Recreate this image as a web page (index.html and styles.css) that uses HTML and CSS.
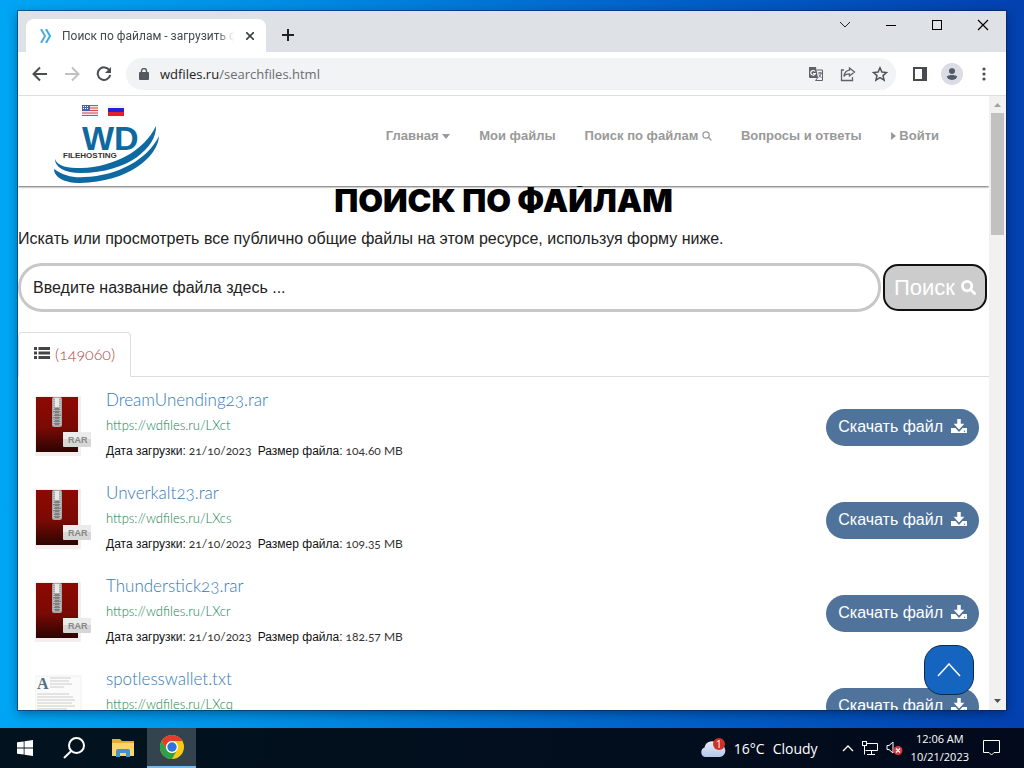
FILE: index.html
```html
<!DOCTYPE html>
<html lang="ru">

<head>
    <meta charset="UTF-8">
    <meta name="viewport" content="width=device-width, initial-scale=1.0">
    <title>Поиск по файлам - загрузить файлы</title>
    <link rel="stylesheet" href="styles.css">
</head>
<body>
    <svg class="defs" width="0" height="0" aria-hidden="true">
        <defs>
            <linearGradient id="red" x1="0" y1="0" x2="0" y2="1">
                <stop offset="0" stop-color="#8c0a02"/>
                <stop offset="0.55" stop-color="#7a0a04"/>
                <stop offset="1" stop-color="#2c0402"/>
            </linearGradient>
            <linearGradient id="cloud" x1="0" y1="0" x2="0" y2="1">
                <stop offset="0" stop-color="#e6ecf8"/>
                <stop offset="1" stop-color="#b3c8ec"/>
            </linearGradient>
            <symbol id="rar" viewBox="0 0 56 66">
                <rect x="0" y="0" width="46" height="60" fill="#f6eeee"/>
                <rect x="1" y="1" width="42" height="55" fill="url(#red)"/>
                <rect x="17" y="1" width="10" height="30" rx="2" fill="#a8a8a8"/>
                <rect x="20" y="2" width="4" height="9" fill="#e8e8e8"/>
                <path d="M19 13h6M18 16h7M19 19h7M18 22h7M19 25h6M19 28h6" stroke="#555" stroke-width="1"/>
                <path d="M19 2v27M25 2v27" stroke="#ddd" stroke-width="1" stroke-dasharray="1 1"/>
                <rect x="28" y="36" width="28" height="15" rx="1" fill="#d6d6d6"/>
                <rect x="28" y="36" width="28" height="7" fill="#ebebeb"/>
                <text x="33" y="47" class="rar-label">RAR</text>
            </symbol>
            <symbol id="txt" viewBox="0 0 56 66">
                <rect x="0" y="1" width="46" height="62" fill="#fbfbfb" stroke="#f0f0f0"/>
                <text x="2" y="14" class="txt-label">A</text>
                <path d="M15 3h21M15 6h19M15 9h22M15 12h14M2 19h32M2 22h36M2 25h38M2 28h35M2 31h38M2 34h30" stroke="#ccc" stroke-width="1"/>
            </symbol>
            <symbol id="download" viewBox="0 0 16 15">
                <path d="M0 9h16v5H0z" fill="#fff"/>
                <path d="M5.500-1h5v5h4.500L8 11.800 1 4h4.500z" fill="#fff" stroke="#4f739b" stroke-width="1.500"/>
                <circle cx="13.500" cy="12.200" r=".7" fill="#4f739b"/>
            </symbol>
            <symbol id="loupe" viewBox="0 0 16 16">
                <circle cx="6.500" cy="6.500" r="5" fill="none" stroke="currentColor"/>
                <path d="M10 10l4.500 4.500" stroke="currentColor" stroke-linecap="round"/>
            </symbol>
        </defs>
    </svg>
    <div class="desktop">
        <div class="window">
            <div class="titlebar">
                <div class="tab">
                    <svg class="favicon" width="12" height="14" viewBox="0 0 12 14" fill="none" stroke-width="2">
                        <path d="M1 0l4 7-4 7" stroke="#5aa9d6"/>
                        <path d="M6 0l4 7-4 7" stroke="#34b0ea"/>
                    </svg>
                    <span class="tab-title">Поиск по файлам - загрузить файлы</span>
                    <button class="icon-btn" aria-label="Закрыть вкладку">
                        <svg width="8" height="8" viewBox="0 0 8 8" stroke="#3c4043" stroke-width="1.600"><path d="M0 0l8 8M8 0L0 8"/></svg>
                    </button>
                </div>
                <button class="icon-btn new-tab" aria-label="Новая вкладка">
                    <svg width="12" height="12" viewBox="0 0 12 12" stroke="#202124" stroke-width="2"><path d="M6 0v12M0 6h12"/></svg>
                </button>
                <div class="win-btns">
                    <button class="icon-btn" aria-label="Поиск вкладок"><svg width="12" height="12" viewBox="0 0 12 12" fill="none" stroke="#222"><path d="M1 3l5 5 5-5"/></svg></button>
                    <button class="icon-btn" aria-label="Свернуть"><svg width="12" height="12" viewBox="0 0 12 12" stroke="#000"><path d="M1 6.500h10"/></svg></button>
                    <button class="icon-btn" aria-label="Развернуть"><svg width="12" height="12" viewBox="0 0 12 12" fill="none" stroke="#000"><rect x="1.500" y="1.500" width="9" height="9"/></svg></button>
                    <button class="icon-btn" aria-label="Закрыть"><svg width="12" height="12" viewBox="0 0 12 12" stroke="#000" stroke-width="1.200"><path d="M1 1l10 10M11 1L1 11"/></svg></button>
                </div>
            </div>
            <div class="toolbar">
                <button class="icon-btn" aria-label="Назад"><svg width="16" height="16" viewBox="0 0 16 16" fill="none" stroke="#4a4d51" stroke-width="2"><path d="M15 8H2M8 1.500L1.500 8 8 14.500"/></svg></button>
                <button class="icon-btn" aria-label="Вперёд"><svg width="16" height="16" viewBox="0 0 16 16" fill="none" stroke="#bfc1c4" stroke-width="2"><path d="M1 8h13M8 1.500L14.500 8 8 14.500"/></svg></button>
                <button class="icon-btn" aria-label="Обновить"><svg width="16" height="16" viewBox="0 0 16 16" fill="none" stroke="#4a4d51" stroke-width="2"><path d="M13.500 4.500A6.300 6.300 0 1 0 14.200 9"/><path d="M15 1v6H9z" fill="#4a4d51" stroke="none"/></svg></button>
                <div class="omnibox">
                    <svg width="10" height="12" viewBox="0 0 10 12"><rect x="0" y="4" width="10" height="8" rx="1" fill="#55585c"/><path d="M2.500 5V3a2.500 2.500 0 0 1 5 0v2" fill="none" stroke="#55585c" stroke-width="1.400"/></svg>
                    <span class="url">wdfiles.ru<span class="path">/searchfiles.html</span></span>
                    <button class="icon-btn" aria-label="Перевести"><svg width="16" height="16" viewBox="0 0 16 16"><path d="M1 1h7l2 11H2a1 1 0 0 1-1-1z" fill="#5f6368"/><path d="M9 4h5.500v10.500H7.500l2-2.500" fill="none" stroke="#5f6368"/><path d="M7 5.500A2.300 2.300 0 1 0 7.300 7.500H5" fill="none" stroke="#fff" stroke-width="1.200"/><path d="M10 7h4M12 6v1M13 7c0 2-1 3-2.500 4.500M11 8.500c.5 1.500 1.500 2.500 2.500 3" fill="none" stroke="#5f6368"/></svg></button>
                    <button class="icon-btn" aria-label="Поделиться"><svg width="16" height="16" viewBox="0 0 16 16" fill="none" stroke="#5f6368" stroke-width="1.300"><path d="M4 4H1.500v10.500h11V11"/><path d="M9.500 2l5 4-5 4V7.800C7 7.800 5 8.500 4 10.500 4.300 7 6.500 4.500 9.500 4.200z"/></svg></button>
                    <button class="icon-btn" aria-label="В закладки"><svg width="16" height="16" viewBox="0 0 16 16" fill="none" stroke="#4f5357" stroke-width="1.500"><path d="M8 1.800l1.900 4.300 4.600.4-3.500 3.100 1.100 4.600L8 11.700l-4.100 2.500L5 9.600 1.500 6.500l4.600-.4z"/></svg></button>
                </div>
                <button class="icon-btn" aria-label="Боковая панель"><svg width="14" height="14" viewBox="0 0 14 14"><rect x="1" y="1" width="12" height="12" fill="none" stroke="#474a4e" stroke-width="2"/><path d="M9 0h5v14H9z" fill="#474a4e"/></svg></button>
                <button class="icon-btn avatar" aria-label="Профиль"><svg width="12" height="12" viewBox="0 0 12 12" fill="#525a66"><circle cx="6" cy="3" r="3"/><path d="M0 12V10c0-2 3-3 6-3s6 1 6 3v2z"/></svg></button>
                <button class="icon-btn" aria-label="Меню"><svg width="4" height="14" viewBox="0 0 4 14" fill="#4a4d51"><circle cx="2" cy="2" r="1.600"/><circle cx="2" cy="7" r="1.600"/><circle cx="2" cy="12" r="1.600"/></svg></button>
            </div>
            <div class="view">
                <div class="page">
                    <header class="header">
                        <div class="brand">
                            <div class="langs">
                                <a href="#" aria-label="English"><svg width="16" height="11" viewBox="0 0 16 11"><rect width="16" height="11" fill="#f4e4e6"/><path d="M0 .5h16M0 3h16M0 5.500h16M0 8h16M0 10.500h16" stroke="#d9475a"/><rect width="8" height="6" fill="#4a5fb0"/><path d="M1 1.500h6M1 3.500h6" stroke="#fff" stroke-dasharray="1 1"/></svg></a>
                                <a href="#" aria-label="Русский"><svg width="16" height="11" viewBox="0 0 16 11"><rect width="16" height="4" fill="#f4f4f4"/><rect y="3" width="16" height="4" fill="#2321d8"/><rect y="7" width="16" height="4" fill="#e0202c"/></svg></a>
                            </div>
                            <a href="#" aria-label="WD Filehosting">
                                <svg class="logo" width="106" height="61" viewBox="0 0 106 61">
                                    <text x="28" y="27" class="logo-wd">WD</text>
                                    <text x="9" y="35" class="logo-sub">FILEHOSTING</text>
                                    <path d="M1 36C4 44 14 45 27 45 60 44 90 28 102 3 103 24 74 50 27 50 10 50 1 44 1 36z" fill="#0d699f"/>
                                    <path d="M0 46c10 7 20 9 30 8C64 53 94 36 105 13c-1 21-31 46-79 47C10 60 0 54 0 46z" fill="#0d699f"/>
                                </svg>
                            </a>
                        </div>
                        <nav class="nav">
                            <a href="#">Главная <svg width="8" height="5" viewBox="0 0 8 5"><path d="M0 0h8L4 5z" fill="#999"/></svg></a>
                            <a href="#">Мои файлы</a>
                            <a href="#">Поиск по файлам <svg class="loupe" width="10" height="10"><use href="#loupe"/></svg></a>
                            <a href="#">Вопросы и ответы</a>
                            <a href="#"><svg width="5" height="8" viewBox="0 0 5 8"><path d="M0 0l5 4-5 4z" fill="#999"/></svg> Войти</a>
                        </nav>
                    </header>
                    <main>
                        <h1>Поиск по файлам</h1>
                        <p class="lead">Искать или просмотреть все публично общие файлы на этом ресурсе, используя форму ниже.</p>
                        <form class="search">
                            <input type="text" aria-label="Название файла" placeholder="Введите название файла здесь ...">
                            <button type="button">Поиск <svg class="loupe" width="15" height="15"><use href="#loupe"/></svg></button>
                        </form>
                        <div class="tabs">
                            <a href="#" class="active">
                                <svg width="16" height="12" viewBox="0 0 16 12" fill="#444"><path d="M0 0h3v3H0zM0 4.500h3v3H0zM0 9h3v3H0zM4.500 0H16v3H4.500zM4.500 4.500H16v3H4.500zM4.500 9H16v3H4.500z"/></svg>
                                (149060)
                            </a>
                        </div>
                        <ul class="files">
                            <li>
                                <svg class="thumb" width="56" height="66"><use href="#rar"/></svg>
                                <div class="info">
                                    <a href="#" class="name">DreamUnending23.rar</a>
                                    <a href="#" class="link">https://wdfiles.ru/LXct</a>
                                    <p><b>Дата загрузки:</b> 21/10/2023 &nbsp;<b>Размер файла:</b> 104.60 MB</p>
                                </div>
                                <button class="download">Скачать файл <svg width="16" height="15"><use href="#download"/></svg></button>
                            </li>
                            <li>
                                <svg class="thumb" width="56" height="66"><use href="#rar"/></svg>
                                <div class="info">
                                    <a href="#" class="name">Unverkalt23.rar</a>
                                    <a href="#" class="link">https://wdfiles.ru/LXcs</a>
                                    <p><b>Дата загрузки:</b> 21/10/2023 &nbsp;<b>Размер файла:</b> 109.35 MB</p>
                                </div>
                                <button class="download">Скачать файл <svg width="16" height="15"><use href="#download"/></svg></button>
                            </li>
                            <li>
                                <svg class="thumb" width="56" height="66"><use href="#rar"/></svg>
                                <div class="info">
                                    <a href="#" class="name">Thunderstick23.rar</a>
                                    <a href="#" class="link">https://wdfiles.ru/LXcr</a>
                                    <p><b>Дата загрузки:</b> 21/10/2023 &nbsp;<b>Размер файла:</b> 182.57 MB</p>
                                </div>
                                <button class="download">Скачать файл <svg width="16" height="15"><use href="#download"/></svg></button>
                            </li>
                            <li>
                                <svg class="thumb" width="56" height="66"><use href="#txt"/></svg>
                                <div class="info">
                                    <a href="#" class="name">spotlesswallet.txt</a>
                                    <a href="#" class="link">https://wdfiles.ru/LXcq</a>
                                </div>
                                <button class="download">Скачать файл <svg width="16" height="15"><use href="#download"/></svg></button>
                            </li>
                        </ul>
                    </main>
                    <button class="to-top" aria-label="Наверх"><svg width="24" height="14" viewBox="0 0 24 14" fill="none" stroke="#fff" stroke-width="1.500"><path d="M1 13L12 1l11 12"/></svg></button>
                </div>
                <div class="scrollbar">
                    <svg width="7" height="4" viewBox="0 0 7 4"><path d="M0 4h7L3.500 0z" fill="#a3a3a3"/></svg>
                    <div class="track"><div class="grip"></div></div>
                    <svg width="7" height="4" viewBox="0 0 7 4"><path d="M0 0h7L3.500 4z" fill="#505050"/></svg>
                </div>
            </div>
        </div>
        <svg class="cursor" width="13" height="20" viewBox="0 0 13 20"><path d="M1 1v15.500l3.700-3.400 2.600 5.700 2.400-1.100-2.600-5.600H12z" fill="#fff" stroke="#111"/></svg>
    </div>
    <footer class="taskbar">
        <button class="task" aria-label="Пуск"><svg width="16" height="16" viewBox="0 0 16 16" fill="#fff"><path d="M0 2.300l6.700-.9v6.200H0zM7.500 1.200L16 0v7.600H7.500zM0 8.400h6.700v6.200L0 13.700zM7.500 8.400H16V16l-8.500-1.200z"/></svg></button>
        <button class="task" aria-label="Поиск"><svg width="22" height="22" viewBox="0 0 22 22" fill="none" stroke="#fff" stroke-width="2"><circle cx="13.500" cy="8.500" r="7.500"/><path d="M8.200 14L1 21"/></svg></button>
        <button class="task" aria-label="Проводник"><svg width="22" height="18" viewBox="0 0 22 18"><path d="M0 0h8l2 2h12v15H0z" fill="#e5ac35"/><path d="M0 4h22v13H0z" fill="#fbd567"/><path d="M4 18v-6a2 2 0 0 1 2-2h10a2 2 0 0 1 2 2v6h-4v-4H8v4z" fill="#3f94d0"/></svg></button>
        <button class="task current" aria-label="Chrome"><svg width="24" height="24" viewBox="0 0 24 24"><circle cx="12" cy="12" r="12" fill="#fbc912"/><path d="M1.600 6A12 12 0 0 1 22.400 6H12a6 6 0 0 0-5.200 9z" fill="#e33b2e"/><path d="M1.600 6A12 12 0 0 0 12 24l5.200-9A6 6 0 0 1 6.800 15z" fill="#2da04c"/><circle cx="12" cy="12" r="6" fill="#fff"/><circle cx="12" cy="12" r="4.700" fill="#2f74dc"/></svg></button>
        <button class="weather">
            <svg width="26" height="20" viewBox="0 0 26 20"><path d="M5 19a5 5 0 0 1-.5-9.500A7.500 7.500 0 0 1 18 6.500a6 6 0 0 1 2 12.500z" fill="url(#cloud)"/><circle cx="19" cy="6" r="6" fill="#cf3327"/><text x="16" y="10" class="badge">1</text></svg>
            <span>16°C</span>
            <span>Cloudy</span>
        </button>
        <div class="tray">
            <svg width="12" height="8" viewBox="0 0 12 8" fill="none" stroke="#fff" stroke-width="1.300"><path d="M1 7l5-5 5 5"/></svg>
            <svg width="16" height="14" viewBox="0 0 16 14" fill="none" stroke="#fff"><path d="M5 2.500h10.500v7H3.500M9.500 9.500v4M5 13.500h8M2.500 5v8.500"/><rect x=".5" y=".5" width="4" height="4"/></svg>
            <svg width="17" height="14" viewBox="0 0 17 14"><path d="M1 4.500h2L7 1v11L3 8.500H1z" fill="none" stroke="#fff"/><circle cx="12" cy="9.500" r="4.500" fill="#d9363e"/><path d="M10 7.500l4 4M14 7.500l-4 4" stroke="#fff" stroke-width="1.200"/></svg>
        </div>
        <div class="clock">12:06 AM<br>10/21/2023</div>
        <button class="notify" aria-label="Уведомления"><svg width="17" height="16" viewBox="0 0 17 16" fill="none" stroke="#fff"><path d="M.5.500h16v12h-5.500L8.500 15 6 12.500H.5z"/></svg></button>
    </footer>
</body>
</html>
```
FILE: styles.css
```css
*{
    padding: 0;
    margin: 0;
    box-sizing: border-box;
}
body{
    height: 100vh;
    display: flex;
    flex-direction: column;
    overflow: hidden;
    font-family: "Liberation Sans", Arial, sans-serif;
}
button{
    font: inherit;
    border: none;
    background: none;
    cursor: pointer;
}
a{
    text-decoration: none;
}
svg{
    flex: none;
}
.defs{
    position: absolute;
}

/* window */
.desktop{
    flex: 1;
    min-height: 0;
    display: flex;
    padding: 11px 18px 18px;
    background: linear-gradient(to right, #00a5f4 0%, #0090e6 25%, #0066cc 60%, #0340b0 100%);
}
.window{
    flex: 1;
    min-width: 0;
    display: flex;
    flex-direction: column;
    overflow: hidden;
    background-color: #fff;
    box-shadow: 0 0 0 1px rgba(0,30,80,0.5), 0 3px 10px rgba(0,0,0,0.4);
}
.titlebar{
    display: flex;
    height: 41px;
    padding: 8px 7px 0 8px;
    background-color: #dee1e6;
}
.icon-btn{
    display: flex;
    align-items: center;
    justify-content: center;
    width: 32px;
    height: 32px;
}
.tab{
    display: flex;
    align-items: center;
    width: 240px;
    padding-left: 14px;
    border-radius: 8px 8px 0 0;
    background-color: #fff;
}
.tab-title{
    flex: 1;
    margin-left: 10px;
    overflow: hidden;
    white-space: nowrap;
    font: 12px Roboto, sans-serif;
    color: #45484c;
    mask-image: linear-gradient(to right, #000 90%, transparent);
}
.new-tab{
    margin-left: 6px;
}
.win-btns{
    display: flex;
    gap: 14px;
    margin: -10px 0 0 auto;
}
.toolbar{
    display: flex;
    align-items: center;
    height: 44px;
    padding: 0 6px;
    border-bottom: 1px solid #dcdfe3;
}
.omnibox{
    flex: 1;
    display: flex;
    align-items: center;
    height: 32px;
    margin: 0 8px 0 6px;
    padding: 0 0 0 13px;
    border-radius: 16px;
    background-color: #f1f3f4;
}
.url{
    flex: 1;
    margin-left: 11px;
    font: 13px "Open Sans", sans-serif;
    color: #202124;
}
.path{
    color: #6a6e73;
}
.avatar svg{
    box-sizing: content-box;
    padding: 5px;
    border-radius: 50%;
    background-color: #dadce6;
}
.view{
    flex: 1;
    min-height: 0;
    display: flex;
}
.scrollbar{
    display: flex;
    flex-direction: column;
    align-items: center;
    width: 17px;
    padding: 7px 0;
    background-color: #f1f1f1;
}
.track{
    flex: 1;
    width: 13px;
    padding: 6px 0;
}
.grip{
    height: 21%;
    background-color: #c1c1c1;
}

/* page */
.page{
    flex: 1;
    min-width: 0;
    position: relative;
    overflow: hidden;
}
.header{
    position: relative;
    z-index: 1;
    display: flex;
    justify-content: space-between;
    height: 90px;
    padding: 0 50px 0 36px;
    background-color: #fff;
    box-shadow: 0 1px 2px rgba(0,0,0,0.6);
}
.langs{
    display: flex;
    gap: 10px;
    height: 27px;
    padding: 6px 0 0 28px;
}
.logo-wd{
    font: bold 34px "Liberation Sans", sans-serif;
    fill: #0d699f;
}
.logo-sub{
    font: bold 8px "Liberation Sans", sans-serif;
    fill: #333;
}
.loupe{
    stroke-width: 3px;
}
.nav{
    display: flex;
    align-items: center;
    gap: 29px;
    padding-bottom: 12px;
}
.nav a{
    font-size: 13px;
    font-weight: bold;
    color: #999;
    white-space: nowrap;
}
.nav svg{
    vertical-align: middle;
}
.nav .loupe{
    stroke-width: 2px;
}
h1{
    margin-top: -5px;
    line-height: 40px;
    text-align: center;
    font-family: Inter, sans-serif;
    font-size: 32px;
    font-weight: 900;
    text-transform: uppercase;
    color: #000;
}
.lead{
    margin: 8px 0 14px;
    font-size: 16px;
    line-height: 20px;
    color: #222;
}
.search{
    display: flex;
    align-items: center;
    gap: 2px;
    padding-right: 2px;
}
.search input{
    flex: 1;
    min-width: 0;
    height: 49px;
    padding: 0 12px;
    border: 3px solid #c8c8c8;
    border-radius: 24px;
    font: 16px "Liberation Sans", sans-serif;
    color: #222;
}
.search input::placeholder{
    color: #222;
}
.search button{
    height: 47px;
    padding: 0 9px;
    border: 2px solid #111;
    border-radius: 15px;
    background-color: #ccc;
    font-size: 22px;
    color: #fff;
    white-space: nowrap;
}
.tabs{
    display: flex;
    margin-top: 20px;
    border-bottom: 1px solid #ddd;
}
.tabs a{
    display: flex;
    align-items: center;
    gap: 5px;
    height: 45px;
    margin-bottom: -1px;
    padding: 0 15px 3px;
    border: 1px solid #ddd;
    border-bottom-color: #fff;
    border-radius: 4px 4px 0 0;
    background-color: #fff;
    font: 300 16px Lato, sans-serif;
    font-variant-numeric: oldstyle-nums;
    color: #b0413e;
}
.files{
    list-style: none;
}
.files li{
    display: flex;
    height: 93px;
    padding: 11px 10px 0 17px;
}
.thumb{
    margin-top: 8px;
}
.rar-label{
    font: bold 9px "Liberation Sans", sans-serif;
    fill: #888;
}
.txt-label{
    font: bold 16px "Liberation Serif", serif;
    fill: #507080;
}
.info{
    flex: 1;
    padding-left: 15px;
    font-family: Lato, sans-serif;
    font-variant-numeric: oldstyle-nums;
}
.info a{
    display: block;
}
.info .name{
    line-height: 24px;
    font-size: 17px;
    font-weight: 300;
    color: #337ab7;
}
.info .link{
    line-height: 26px;
    font-size: 13px;
    font-weight: 300;
    color: #108050;
}
.info p{
    line-height: 26px;
    font-size: 12px;
    color: #333;
}
.info b{
    font-family: "Liberation Sans", sans-serif;
    font-weight: normal;
    color: #111;
}
.download{
    display: flex;
    align-items: center;
    gap: 8px;
    height: 37px;
    margin-top: 21px;
    padding: 0 12px 2px;
    border-radius: 19px;
    background-color: #4f739b;
    font-size: 16px;
    color: #fff;
    white-space: nowrap;
}
.to-top{
    position: absolute;
    right: 15px;
    bottom: 15px;
    width: 50px;
    height: 50px;
    padding-top: 4px;
    border: 1px solid #0a2a50;
    border-radius: 18px;
    background-color: #1565c0;
}
.cursor{
    position: absolute;
    left: 297px;
    top: 122px;
}

/* taskbar */
.taskbar{
    display: flex;
    align-items: center;
    height: 40px;
    padding-right: 6px;
    background: linear-gradient(to right, #02131f, #020a1c);
    font-family: "Open Sans", sans-serif;
    color: #fff;
}
.task{
    display: flex;
    align-items: center;
    justify-content: center;
    width: 49px;
    height: 40px;
}
.current{
    border-bottom: 2px solid #76b9ed;
    background-color: #34444f;
}
.weather{
    display: flex;
    align-items: center;
    gap: 8px;
    margin-left: auto;
    font-size: 14px;
    color: #fff;
}
.badge{
    font: 10px "Open Sans", sans-serif;
    fill: #fff;
}
.tray{
    display: flex;
    align-items: center;
    gap: 8px;
    margin-left: 24px;
}
.clock{
    margin-left: 8px;
    text-align: center;
    font-size: 11px;
    line-height: 18px;
}
.notify{
    display: flex;
    padding: 0 18px 0 14px;
}
```
